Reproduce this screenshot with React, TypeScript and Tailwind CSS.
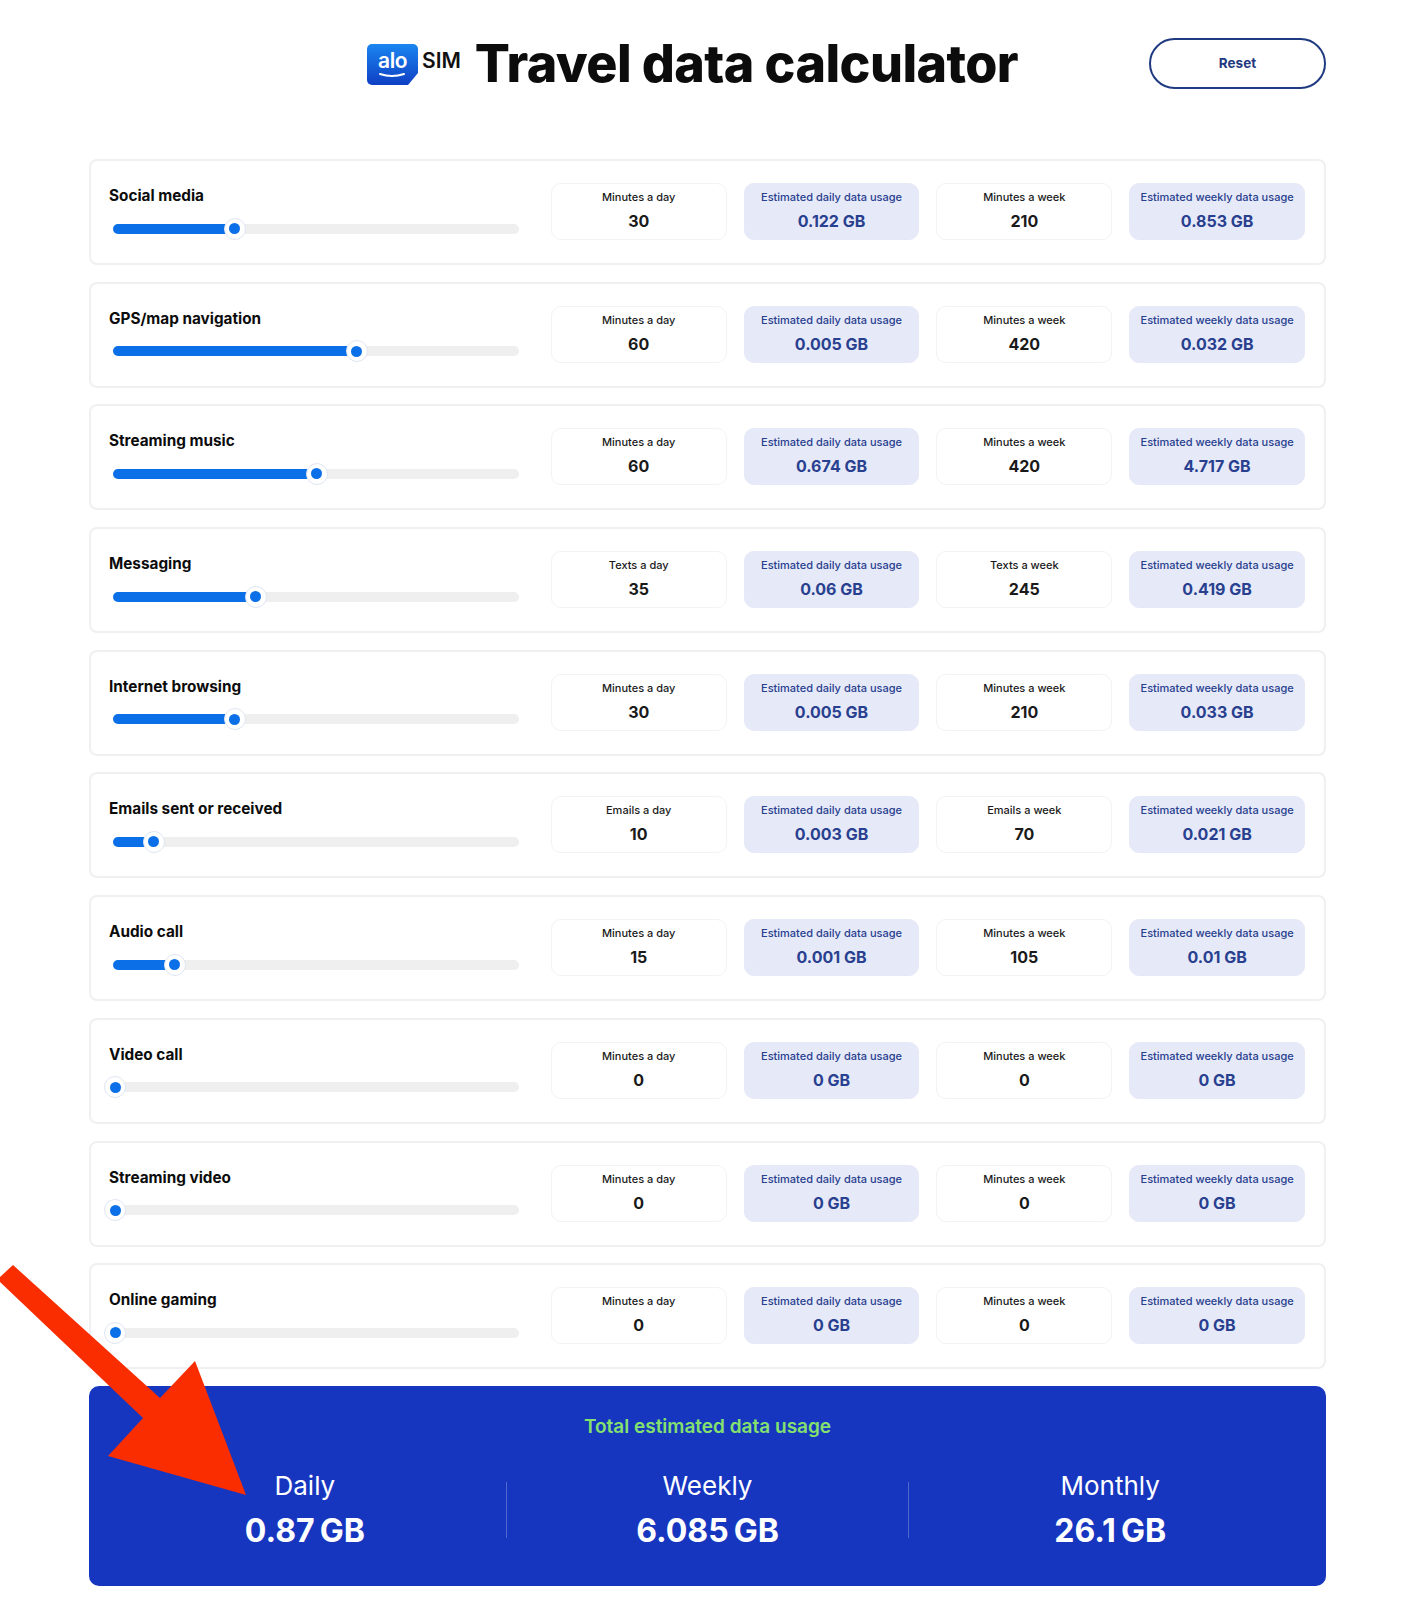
const rows = [
  { name: 'Social media', pos: 30, unit: 'Minutes', day: '30', week: '210', dayGb: '0.122 GB', weekGb: '0.853 GB' },
  { name: 'GPS/map navigation', pos: 60, unit: 'Minutes', day: '60', week: '420', dayGb: '0.005 GB', weekGb: '0.032 GB' },
  { name: 'Streaming music', pos: 50.2, unit: 'Minutes', day: '60', week: '420', dayGb: '0.674 GB', weekGb: '4.717 GB' },
  { name: 'Messaging', pos: 35.1, unit: 'Texts', day: '35', week: '245', dayGb: '0.06 GB', weekGb: '0.419 GB' },
  { name: 'Internet browsing', pos: 30, unit: 'Minutes', day: '30', week: '210', dayGb: '0.005 GB', weekGb: '0.033 GB' },
  { name: 'Emails sent or received', pos: 10, unit: 'Emails', day: '10', week: '70', dayGb: '0.003 GB', weekGb: '0.021 GB' },
  { name: 'Audio call', pos: 15.2, unit: 'Minutes', day: '15', week: '105', dayGb: '0.001 GB', weekGb: '0.01 GB' },
  { name: 'Video call', pos: 0, unit: 'Minutes', day: '0', week: '0', dayGb: '0 GB', weekGb: '0 GB' },
  { name: 'Streaming video', pos: 0, unit: 'Minutes', day: '0', week: '0', dayGb: '0 GB', weekGb: '0 GB' },
  { name: 'Online gaming', pos: 0, unit: 'Minutes', day: '0', week: '0', dayGb: '0 GB', weekGb: '0 GB' },
];

const totals = [
  { label: 'Daily', value: '0.87', unit: 'GB' },
  { label: 'Weekly', value: '6.085', unit: 'GB' },
  { label: 'Monthly', value: '26.1', unit: 'GB' },
];

function Logo() {
  return (
    <div className="flex items-start gap-[4px]">
      <div className="relative h-[41px] w-[51px]">
        <svg width="51" height="41" viewBox="0 0 51 41" className="absolute inset-0">
          <defs>
            <linearGradient id="aloBlue" x1="0" y1="0" x2="0" y2="1">
              <stop offset="0" stopColor="#1a86f0" />
              <stop offset="1" stopColor="#0f3fc4" />
            </linearGradient>
          </defs>
          <path d="M5 0H46a5 5 0 0 1 5 5V29L41 41H5a5 5 0 0 1-5-5V5a5 5 0 0 1 5-5Z" fill="url(#aloBlue)" />
          <path d="M13 30q12 4 24 0" fill="none" stroke="#fff" strokeWidth="2" strokeLinecap="round" />
        </svg>
        <span className="absolute left-0 right-0 top-[5px] text-center text-[21px] leading-[24px] font-semibold tracking-[-0.5px] text-white">alo</span>
      </div>
      <span className="mt-[5px] text-[21px] leading-[24px] font-semibold text-[#111]">SIM</span>
    </div>
  );
}

function Slider({ pos }: { pos: number }) {
  return (
    <div className="relative h-[10px] w-[406px] rounded-full bg-[#efefef]">
      <div className="h-full rounded-full bg-[#0b6fe8]" style={{ width: `${pos}%` }} />
      <div
        className="absolute top-1/2 flex h-[22px] w-[22px] -translate-x-1/2 -translate-y-1/2 items-center justify-center rounded-full border border-[#dfe5f3] bg-white"
        style={{ left: `${Math.max(pos, 0.6)}%` }}
      >
        <div className="h-[11px] w-[11px] rounded-full bg-[#0b6fe8]" />
      </div>
    </div>
  );
}

function Stat({ label, value, tinted }: { label: string; value: string; tinted?: boolean }) {
  return (
    <div className={`flex h-[57px] w-[175.8px] flex-col items-center rounded-[10px] border pt-[5px] ${tinted ? 'border-[#e6e9f7] bg-[#e6e9f7] text-[#28408f]' : 'border-[#f3f3f3] bg-white text-[#1a1a1a]'}`}>
      <div className="text-[11px] leading-[16px] font-medium whitespace-nowrap">{label}</div>
      <div className="mt-[4px] text-[16px] leading-[24px] font-bold">{value}</div>
    </div>
  );
}

export default function App() {
  return (
    <div className="relative h-[1600px] overflow-hidden bg-white px-[89px] font-['Inter','Liberation_Sans',sans-serif]">
      <header className="flex h-[127px] items-start pt-[38px]">
        <div className="ml-[278px] flex items-center gap-[14px]">
          <div className="pt-[3px]"><Logo /></div>
          <h1 className="pt-[2px] text-[52px] leading-[48px] font-extrabold tracking-[-0.6px] whitespace-nowrap text-[#0c0c0c]">Travel data calculator</h1>
        </div>
        <button className="ml-auto h-[51px] w-[177px] rounded-full border-2 border-[#1f3a80] bg-white text-[13.5px] font-bold text-[#1f3a80]">Reset</button>
      </header>

      <div className="mt-[32px] flex flex-col gap-[16.7px]">
        {rows.map(row => (
          <div key={row.name} className="flex h-[106px] items-start justify-between rounded-[8px] border-2 border-[#f0f0f0] pr-[19px] pl-[18px]">
            <div className="pt-[24px]">
              <div className="text-[15.3px] leading-[22px] font-bold text-[#0c0c0c]">{row.name}</div>
              <div className="mt-[16.5px] ml-[4px]"><Slider pos={row.pos} /></div>
            </div>
            <div className="flex gap-[17px] pt-[22px]">
              <Stat label={`${row.unit} a day`} value={row.day} />
              <Stat label="Estimated daily data usage" value={row.dayGb} tinted />
              <Stat label={`${row.unit} a week`} value={row.week} />
              <Stat label="Estimated weekly data usage" value={row.weekGb} tinted />
            </div>
          </div>
        ))}
      </div>

      <div className="mt-[17px] h-[200px] rounded-[10px] bg-[#1736bf] px-[15px] pt-[29px]">
        <div className="text-center text-[19px] leading-[24px] font-semibold text-[#84e06f]">Total estimated data usage</div>
        <div className="mt-[29px] flex items-start">
          {totals.map((t, i) => (
            <div key={t.label} className="contents">
              {i > 0 && <div className="mt-[14px] h-[56px] w-px shrink-0 bg-white/25" />}
              <div className="flex flex-1 flex-col items-center">
                <div className="text-[26px] leading-[36px] text-white">{t.label}</div>
                <div className="mt-[6px] text-[32px] leading-[42px] font-bold text-white">
                  {t.value}
                  <span className="ml-[5px]">{t.unit}</span>
                </div>
              </div>
            </div>
          ))}
        </div>
      </div>

      <svg className="pointer-events-none absolute inset-0" width="1415" height="1600" viewBox="0 0 1415 1600">
        <polygon points="13,1265 160,1398 195,1361 246,1495 108,1456 143,1418 0,1282 0,1277" fill="#fa2d00" />
      </svg>
    </div>
  );
}
